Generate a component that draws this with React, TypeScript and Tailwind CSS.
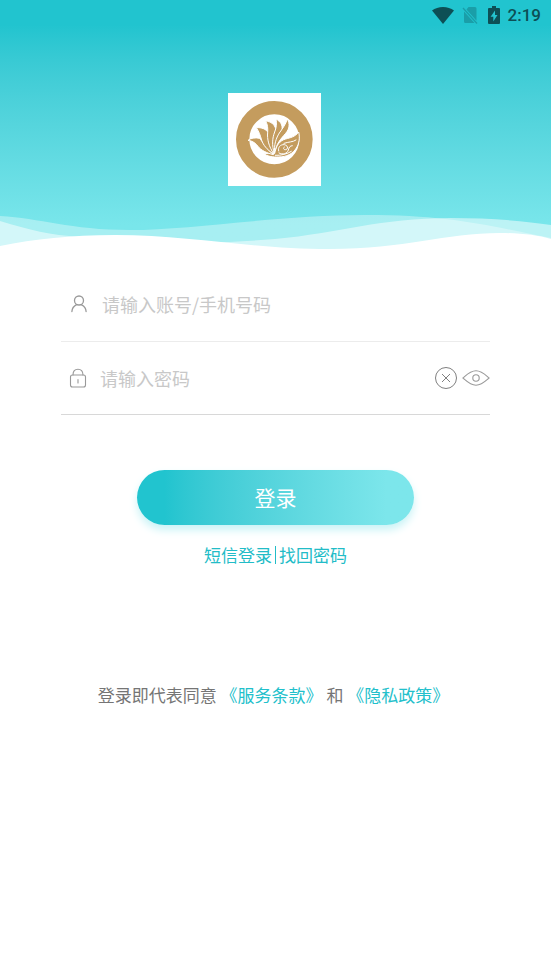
import React from 'react';

const WifiIcon = () => (
  <svg className="w-[22px] h-[17px]" viewBox="0 0 22 17" fill="#0d4f55" aria-hidden="true">
    <path d="M0 3.6C3 1.2 6.8 0 11 0s8 1.2 11 3.6L11 17z" />
  </svg>
);

const NoSimIcon = () => (
  <svg className="w-4 h-[18px]" viewBox="0 0 16 18" aria-hidden="true">
    <path d="M6.5 1H13a1.500 1.500 0 0 1 1.500 1.500v12.200L4.500 3.500zM2 5.500 12.500 17h-9A1.500 1.500 0 0 1 2 15.500z" fill="#1a9ea8" />
    <path d="M1 2l14 15.500" stroke="#1a9ea8" strokeWidth="1.3" />
  </svg>
);

const BatteryIcon = () => (
  <svg className="w-3 h-[18px]" viewBox="0 0 12 18" aria-hidden="true">
    <path d="M4 0h4v2h3a1 1 0 0 1 1 1v14a1 1 0 0 1-1 1H1a1 1 0 0 1-1-1V3a1 1 0 0 1 1-1h3z" fill="#0d4f55" />
    <path d="M7 4.5 2.6 10.7h2.7v4.8l4.2-6.4H7z" fill="#24c3ce" />
  </svg>
);

const Logo = () => (
  <svg className="w-[93px] h-[93px] bg-white" viewBox="18 15 279 279" role="img" aria-label="logo">
    <circle cx="157" cy="154" r="95" fill="none" stroke="#c49c5e" strokeWidth="40" />
    <g fill="#c49c5e" stroke="#fff" strokeWidth="3" strokeLinejoin="round">
      <path d="M230 132c-11 15-25 17-39 21-18 5-28 20-31 36-6 8-20 9-33 7 5 9 27 12 43 11 24 0 43-10 53-27 9-14 11-32 7-48z" />
      <path d="M78 157c8-7 22-9 34-6 10 9 20 28 42 49-20-5-37-13-46-25-7-9-15-16-30-18z" />
      <path d="M103 119c15-1 30 4 35 15 5 20 6 41 17 65-22-16-31-28-36-42-4-15-8-26-16-38z" />
      <path d="M131 99c16 2 27 10 30 24 0 22-9 46-5 75-16-22-21-46-19-64 1-14 0-24-6-35z" />
      <path d="M162 93c14 8 20 18 18 33-4 20-20 38-23 70-8-24-6-46 1-64 5-13 7-26 4-39z" />
      <path d="M196 93c8 14 7 29-5 43-13 15-29 31-33 60-3-25 5-47 14-61 9-13 19-25 24-42z" />
    </g>
    <g fill="none" stroke="#fff" strokeWidth="3" strokeLinecap="round">
      <path d="M170 189c-3-11 5-20 17-19 11 2 13 13 4 15-6 1-9-5-4-8" />
      <path d="M171 195c11 6 25 2 28-9 2-8 5-13 12-13" />
      <path d="M222 156c-10 7-22 5-36 10M160 202c16 1 36-4 48-12" />
    </g>
  </svg>
);

const Waves = () => (
  <svg className="block w-full h-9 mt-7" viewBox="0 0 551 36" preserveAspectRatio="none" aria-hidden="true">
    <path d="M0 2C40 4 70 16 130 16S280 1 365 1s120 10 186 23v12H0z" fill="#fff" fillOpacity=".35" />
    <path d="M0 7c30 9 50 14 80 16 60 5 110 9 195 2C340 19 380 4 450 4c40 0 75 3 101 7v25H0z" fill="#fff" fillOpacity=".5" />
    <path d="M0 32c35-7 70-11 115-11 75 0 135 14 215 14 75 0 115-16 170-16 20 0 37 2 51 6v11H0z" fill="#fff" />
  </svg>
);

const UserIcon = () => (
  <svg className="w-4 h-[18px]" viewBox="0 0 16 18" fill="none" stroke="#999" strokeWidth="1.3" strokeLinecap="round" aria-hidden="true">
    <circle cx="8" cy="5.5" r="4.5" />
    <path d="M5.6 9.6C2.8 11 1 13.3.9 16.6M10.500 9.800C13.200 11 15 13.200 15.100 16.600" />
  </svg>
);

const LockIcon = () => (
  <svg className="w-[18px] h-5" viewBox="0 0 18 20" fill="none" stroke="#999" strokeWidth="1.1" strokeLinecap="round" aria-hidden="true">
    <rect x="1.5" y="7" width="15" height="12" rx="2" />
    <path d="M4 7C4 3 6 1.2 9 1.2S14 3 14 7M9 11.5v3.500" />
  </svg>
);

const ClearIcon = () => (
  <svg className="w-6 h-6" viewBox="0 0 24 24" fill="none" stroke="#808080" strokeWidth="1" aria-hidden="true">
    <circle cx="12" cy="12" r="10.5" />
    <path d="m8 8 8 8M16 8l-8 8" />
  </svg>
);

const EyeIcon = () => (
  <svg className="w-7 h-4" viewBox="0 0 28 16" fill="none" stroke="#999" strokeWidth="1.1" aria-hidden="true">
    <path d="M1 8c4-3.500 7.500-7.200 13-7.200S23 4.500 27 8c-4 3.500-7.500 7.200-13 7.200S5 11.500 1 8z" />
    <circle cx="14" cy="8" r="3.2" />
  </svg>
);

const inputClass =
  'flex-1 min-w-0 bg-transparent text-lg text-gray-700 placeholder:text-[#c8c8c8] outline-none';

export default function App() {
  return (
    <div className="min-h-screen bg-white font-['Noto_Sans_CJK_SC','Noto_Sans',sans-serif]">
      <header className="flex flex-col items-center bg-linear-to-b from-[#21c4cf] from-10% to-[#79e6eb] to-90%">
        <div className="self-stretch h-[30px] pr-[10px] flex items-center justify-end gap-2">
          <WifiIcon />
          <NoSimIcon />
          <span className="pl-0.5">
            <BatteryIcon />
          </span>
          <span className="font-[Roboto,sans-serif] font-medium text-[17px] leading-5 text-[#0d4f55]">2:19</span>
        </div>
        <div className="mt-[63px] pr-0.5">
          <Logo />
        </div>
        <Waves />
      </header>

      <main className="pt-[19px]">
        <form className="px-[61px] flex flex-col" onSubmit={(e) => e.preventDefault()}>
          <div className="h-[73px] pl-[10px] pb-0.5 flex items-center gap-[15px] border-b border-[#ececec]">
            <UserIcon />
            <input type="text" aria-label="账号" placeholder="请输入账号/手机号码" className={inputClass} />
          </div>
          <div className="h-[73px] pl-2 flex items-center gap-[13px] border-b border-[#d8d8d8]">
            <LockIcon />
            <input type="password" aria-label="密码" placeholder="请输入密码" className={inputClass} />
            <div className="flex items-center gap-1">
              <button type="button" aria-label="清除">
                <ClearIcon />
              </button>
              <button type="button" aria-label="显示密码">
                <EyeIcon />
              </button>
            </div>
          </div>
          <button
            type="submit"
            className="mt-[55px] self-center w-[277px] h-[55px] rounded-full bg-linear-to-r from-[#21c4cf] from-10% to-[#7ce6eb] to-90% text-[21px] text-white shadow-[0_5px_9px_#c9f3f6]"
          >
            登录
          </button>
        </form>

        <nav className="mt-[18px] flex items-center justify-center gap-[3px] text-[17px] leading-6 text-[#22bcc7]">
          <a href="#sms">短信登录</a>
          <span className="w-px h-[18px] bg-[#22bcc7]" />
          <a href="#reset">找回密码</a>
        </nav>

        <p className="mt-[116px] pr-1 text-center text-[17px] leading-6 text-[#757575]">
          登录即代表同意 <a href="#terms" className="text-[#22c0cb]">《服务条款》</a> 和{' '}
          <a href="#privacy" className="text-[#22c0cb]">《隐私政策》</a>
        </p>
      </main>
    </div>
  );
}
